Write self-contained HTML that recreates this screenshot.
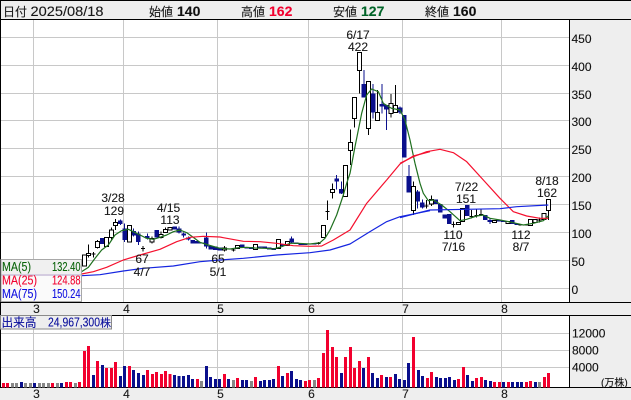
<!DOCTYPE html>
<html><head><meta charset="utf-8">
<style>
html,body{margin:0;padding:0;background:#fff;width:631px;height:400px;overflow:hidden}
svg{display:block}
text{font-family:"Liberation Sans","Noto Sans CJK JP",sans-serif;font-size:12px;fill:#181818;stroke:#181818;stroke-width:.12px}
.c{text-anchor:middle}
.r{text-anchor:end}
.a{fill:#111}
.b{font-weight:bold;font-size:14px}
</style></head><body>
<svg width="631" height="400" viewBox="0 0 631 400" xmlns="http://www.w3.org/2000/svg">
<rect width="631" height="400" fill="#fff"/>
<!-- strips -->
<rect x="0" y="0" width="631" height="20" fill="#eee"/>
<rect x="570" y="20" width="61" height="282" fill="#eee"/>
<rect x="570" y="315" width="61" height="73" fill="#eee"/>
<rect x="0" y="302" width="631" height="14" fill="#eee"/>
<rect x="0" y="388" width="631" height="12" fill="#eee"/>
<!-- grid -->
<g shape-rendering="crispEdges" fill="#c8c8c8">
<rect x="1" y="37" width="568" height="1"/><rect x="1" y="65" width="568" height="1"/><rect x="1" y="93" width="568" height="1"/><rect x="1" y="120" width="568" height="1"/><rect x="1" y="148" width="568" height="1"/><rect x="1" y="176" width="568" height="1"/><rect x="1" y="204" width="568" height="1"/><rect x="1" y="232" width="568" height="1"/><rect x="1" y="260" width="568" height="1"/><rect x="1" y="288" width="568" height="1"/>
<rect x="1" y="333" width="568" height="1"/><rect x="1" y="350" width="568" height="1"/><rect x="1" y="367" width="568" height="1"/>
<rect x="33" y="20" width="1" height="282"/><rect x="123" y="20" width="1" height="282"/><rect x="217" y="20" width="1" height="282"/><rect x="308" y="20" width="1" height="282"/><rect x="402" y="20" width="1" height="282"/><rect x="501" y="20" width="1" height="282"/>
<rect x="33" y="316" width="1" height="71"/><rect x="123" y="316" width="1" height="71"/><rect x="217" y="316" width="1" height="71"/><rect x="308" y="316" width="1" height="71"/><rect x="402" y="316" width="1" height="71"/><rect x="501" y="316" width="1" height="71"/>
</g>
<!-- frame lines -->
<g shape-rendering="crispEdges" fill="#000">
<rect x="0" y="0" width="631" height="1"/>
<rect x="0" y="19" width="631" height="1"/>
<rect x="0" y="302" width="631" height="1"/>
<rect x="0" y="315" width="631" height="1"/>
<rect x="0" y="387" width="631" height="1"/>
<rect x="0" y="0" width="1" height="388"/>
<rect x="569" y="20" width="1" height="282"/>
<rect x="569" y="316" width="1" height="71"/>
</g>
<!-- volume bars -->
<g fill="none" stroke-width="9" shape-rendering="crispEdges">
<g transform="translate(0 300) scale(.33333)">
<path stroke="#f2002e" d="M10 262V249M23 262V249M158 262V249M199 262V246M212 262V246M239 262V246M253 262V153M266 262V138M293 262V183M320 262V204M334 262V204M347 262V186M388 262V198M442 262V210M457 262V222M470 262V216M484 262V222M496 262V213M510 262V222M592 262V237"/>
<path stroke="#0a0f8c" d="M64 262V246M104 262V249M185 262V249M280 262V225M307 262V195M361 262V228M374 262V198M401 262V210M415 262V219M430 262V225M523 262V225M537 262V228M551 262V228M565 262V225M578 262V237M619 262V198"/>
<path stroke="#888" d="M37 262V249M50 262V249M77 262V249M91 262V249M118 262V249M131 262V249M145 262V249M172 262V249M226 262V249M605 262V243"/>
</g>
<g transform="translate(210 300) scale(.33333)">
<path stroke="#f2002e" d="M43 262V222M83 262V234M137 262V231M205 262V198M232 262V219M286 262V243M299 262V240M326 262V234M340 262V159M353 262V90M367 262V141M380 262V171M407 262V171M421 262V141M434 262V204M448 262V183M475 262V171M515 262V225M542 262V231"/>
<path stroke="#0a0f8c" d="M2 262V231M16 262V237M28 262V237M56 262V237M97 262V240M110 262V240M151 262V243M164 262V240M178 262V240M191 262V237M218 262V228M245 262V213M259 262V237M272 262V240M394 262V219M461 262V204M488 262V219M502 262V234M529 262V231M556 262V222M569 262V237M583 262V240M596 262V189"/>
<path stroke="#888" d="M70 262V240M124 262V243M313 262V240"/>
</g>
<g transform="translate(411 300) scale(.33333)">
<path stroke="#f2002e" d="M7 262V111M49 262V234M61 262V216M142 262V237M157 262V201M196 262V234M211 262V231M250 262V246M265 262V246M292 262V246M346 262V246M358 262V243M400 262V231M412 262V219"/>
<path stroke="#0a0f8c" d="M22 262V210M34 262V228M76 262V231M88 262V234M103 262V234M115 262V231M130 262V240M169 262V225M184 262V243M223 262V240M238 262V243M277 262V246M304 262V246M319 262V246M331 262V246M373 262V246"/>
<path stroke="#888" d="M385 262V246"/>
</g>
</g>
<!-- candles -->
<g shape-rendering="crispEdges" fill="none">
<g transform="translate(0 180) scale(.33333)">
<path stroke="#0a0f8c" stroke-width="3" d="M361 118V135M374 130V186M401 145V170M415 155V195M442 160V178M537 140V160M551 157V172M565 170V182M619 158V205"/>
<path stroke="#0a0f8c" stroke-width="14" d="M361 122V132M374 145V180M401 153V166M415 160V186M442 168V176M470 150V172M524 140V148M537 145V158M551 160V167M565 173V179M578 180V190M592 183V190M605 187V191M619 172V200M307 174V192"/>
<path stroke="#000" stroke-width="3" d="M266 193V232M280 216V232M293 180V206M334 142V178M347 117V150M429 198V214M456 170V190M483 155V175M497 143V158M274 222h12M423 206h12"/>
<path stroke="#000" stroke-width="3" fill="#fff" d="M247 225h12V258h-12zM260 220h12V226h-12zM287 184h12V202h-12zM314 172h12V200h-12zM328 150h12V172h-12zM341 127h12V137h-12zM382 136h12V186h-12zM450 176h12V186h-12zM477 163h12V173h-12zM491 148h12V158h-12zM504 142h12V150h-12z"/>
</g>
<g transform="translate(210 180) scale(.33333)">
<path stroke="#0a0f8c" stroke-width="14" d="M2 198V208M16 200V210M29 203V212M56 205V209M97 193V203M110 201V205M124 201V207M151 199V203M164 200V205M178 203V208M191 204V210M218 193V198M245 176V188M259 187V192M272 190V195M286 191V195M299 190V194M313 190V193"/>
<path stroke="#0a0f8c" stroke-width="3" d="M245 170V190"/>
<path stroke="#000" stroke-width="3" d="M43 198V214M70 205V214M64 210h12M320 190h12M326 186V194"/>
<path stroke="#000" stroke-width="3" fill="#fff" d="M37 204h12V210h-12zM77 197h12V205h-12zM131 194h12V208h-12zM199 178h12V206h-12zM226 184h12V196h-12zM334 136h12V172h-12z"/>
</g>
<g transform="translate(320 40) scale(.33333)">
<path stroke="#0a0f8c" stroke-width="3" d="M50 405V448M64 425V462M132 90V173M159 132V235M186 132V220M199 200V270M240 200V222"/>
<path stroke="#0a0f8c" stroke-width="14" d="M50 415V425M64 447V461M132 132V173M159 160V218M186 192V200M199 195V208M240 202V218M253 225V352"/>
<path stroke="#000" stroke-width="3" d="M23 482V540M17 515h12M37 430V475M91 268V375M104 235V262M118 92V160M145 265V285M172 150V218M213 162V232M226 135V218"/>
<path stroke="#000" stroke-width="3" fill="#fff" d="M31 448h12V458h-12zM71 376h12V470h-12zM85 308h12V332h-12zM98 172h12V235h-12zM112 38h12V92h-12zM139 125h12V265h-12zM166 218h12V241h-12zM207 190h12V220h-12zM220 197h12V218h-12z"/>
</g>
<g transform="translate(400 130) scale(.33333)">
<path stroke="#0a0f8c" stroke-width="3" d="M27 105V187M53 180V235M67 208V235M270 265V282"/>
<path stroke="#0a0f8c" stroke-width="14" d="M27 138V187M53 185V215M67 218V232M107 208V222M121 222V248M134 253V266M148 252V282M202 225V258M256 255V270M270 270V276M297 270V275M310 272V276M337 270V282M351 280V285"/>
<path stroke="#000" stroke-width="3" d="M40 155V255M80 210V235M74 228h12M94 197V228M161 275V292M155 284h12M215 240V265M209 260h12M229 238V262M223 256h12M243 237V258M237 253h12M364 285h-8M372 285h12M418 262V278M412 270h12M445 241V270"/>
<path stroke="#000" stroke-width="3" fill="#fff" d="M34 170h12V242h-12zM88 208h12V222h-12zM169 277h12V284h-12zM182 235h12V275h-12zM277 271h12V277h-12zM318 274h12V280h-12zM385 268h12V287h-12zM399 268h12V278h-12zM426 250h12V268h-12zM439 208h12V241h-12z"/>
</g>
</g>
<!-- moving averages -->
<g fill="none" stroke-width="3.600" stroke-linejoin="round">
<g transform="translate(0 180) scale(.33333)">
<polyline stroke="#1f701f" points="245,275 265,262 285,235 305,210 325,195 345,165 365,152 385,148 400,155 420,165 440,175 460,178 480,172 500,165 520,155 540,150 560,158 580,172 600,187 625,195 660,205"/>
<polyline stroke="#f5102e" points="245,282 280,275 320,262 370,240 420,225 480,208 530,185 570,172 610,169 660,171"/>
<polyline stroke="#1525e0" points="245,287 300,284 370,273 430,265 520,258 600,245 660,240"/>
</g>
<g transform="translate(210 180) scale(.33333)">
<polyline stroke="#1f701f" points="30,205 60,207 85,203 110,202 135,204 165,205 190,207 215,200 240,190 265,190 300,192 330,188 345,175 360,150 380,105 400,45 410,10 415,-5"/>
<polyline stroke="#f5102e" points="30,171 40,173 100,184 150,185 200,190 250,197 300,199 335,198 370,180 420,150 470,70 530,0"/>
<polyline stroke="#1525e0" points="30,240 100,235 200,225 300,218 360,210 420,192 480,155 530,125 570,110 620,100 660,92"/>
</g>
<g transform="translate(320 40) scale(.33333)">
<polyline stroke="#1f701f" points="85,415 90,400 105,320 125,220 140,165 155,147 175,155 190,190 215,205 240,210 255,240 270,300 285,370"/>
<polyline stroke="#f5102e" points="200,420 240,372 280,348 330,335"/>
</g>
<g transform="translate(400 130) scale(.33333)">
<polyline stroke="#1f701f" points="45,100 60,160 70,190 85,212 100,210 125,225 150,245 180,272 200,268 230,258 250,255 270,265 300,270 340,278 370,285 400,280 430,272 445,258"/>
<polyline stroke="#f5102e" points="0,100 40,80 80,65 120,58 160,68 200,95 250,150 300,205 340,245 380,258 420,265 445,265"/>
<polyline stroke="#1525e0" points="0,263 30,255 90,240 200,238 300,236 350,230 445,225"/>
</g>
</g>
<!-- header -->
<text x="3" y="16">日付</text><text x="30.5" y="16" style="font-size:14px" textLength="73" lengthAdjust="spacingAndGlyphs">2025/08/18</text>
<text x="149" y="16">始値</text><text x="177" y="16" class="b" style="fill:#111">140</text>
<text x="241" y="16">高値</text><text x="269" y="16" class="b" style="fill:#f2002e;stroke:#f2002e">162</text>
<text x="333" y="16">安値</text><text x="361" y="16" class="b" style="fill:#006428;stroke:#006428">127</text>
<text x="425" y="16">終値</text><text x="453" y="16" class="b" style="fill:#111">160</text>
<!-- price axis -->
<text x="571.5" y="43" class="a">450</text><text x="571.5" y="71" class="a">400</text><text x="571.5" y="99" class="a">350</text><text x="571.5" y="126" class="a">300</text><text x="571.5" y="154" class="a">250</text><text x="571.5" y="182" class="a">200</text><text x="571.5" y="210" class="a">150</text><text x="571.5" y="238" class="a">100</text><text x="571.5" y="266" class="a">50</text><text x="571.5" y="294" class="a">0</text>
<!-- chart labels -->
<text x="358" y="39" class="c">6/17</text><text x="358" y="51" class="c">422</text>
<text x="113" y="202" class="c">3/28</text><text x="114" y="215" class="c">129</text>
<text x="168.500" y="212" class="c">4/15</text><text x="170" y="224" class="c">113</text>
<text x="142" y="263" class="c">67</text><text x="142" y="276" class="c">4/7</text>
<text x="218" y="263" class="c">65</text><text x="218" y="276" class="c">5/1</text>
<text x="466.500" y="191" class="c">7/22</text><text x="466" y="203" class="c">151</text>
<text x="453" y="239" class="c">110</text><text x="453.500" y="251" class="c">7/16</text>
<text x="521" y="239" class="c">112</text><text x="521" y="251" class="c">8/7</text>
<text x="547" y="185" class="c">8/18</text><text x="547" y="197" class="c">162</text>
<!-- MA box -->
<rect x="1" y="259.500" width="80.500" height="42" fill="#fafafa" stroke="#a8a8a8"/>
<rect x="1.500" y="260" width="79.500" height="14" fill="#f0f0f0"/>
<rect x="1.500" y="274" width="79.500" height="2" fill="#d4cce0"/>
<text x="2" y="271" style="font-size:13px;fill:#0a640a;stroke:#0a640a" textLength="29" lengthAdjust="spacingAndGlyphs">MA(5)</text><text x="52" y="271" style="font-size:13px;fill:#0a640a;stroke:#0a640a" textLength="28.500" lengthAdjust="spacingAndGlyphs">132.40</text>
<text x="2" y="284.500" style="font-size:13px;fill:#f2002e;stroke:#f2002e" textLength="35" lengthAdjust="spacingAndGlyphs">MA(25)</text><text x="52" y="284.500" style="font-size:13px;fill:#f2002e;stroke:#f2002e" textLength="28.500" lengthAdjust="spacingAndGlyphs">124.88</text>
<text x="2" y="298" style="font-size:13px;fill:#1010e0;stroke:#1010e0" textLength="35" lengthAdjust="spacingAndGlyphs">MA(75)</text><text x="52" y="298" style="font-size:13px;fill:#1010e0;stroke:#1010e0" textLength="28.500" lengthAdjust="spacingAndGlyphs">150.24</text>
<!-- month labels -->
<g class="a">
<text x="36.500" y="313" class="c">3</text><text x="126.500" y="313" class="c">4</text><text x="220.500" y="313" class="c">5</text><text x="311.500" y="313" class="c">6</text><text x="405.500" y="313" class="c">7</text><text x="504.500" y="313" class="c">8</text>
<text x="36.500" y="398" class="c">3</text><text x="126.500" y="398" class="c">4</text><text x="220.500" y="398" class="c">5</text><text x="311.500" y="398" class="c">6</text><text x="405.500" y="398" class="c">7</text><text x="504.500" y="398" class="c">8</text>
</g>
<!-- volume label -->
<rect x="0.500" y="315.500" width="111" height="13.500" fill="#eee" stroke="#8a8a8a"/>
<text x="1.500" y="326.500" style="fill:#0a0f9c;stroke:#0a0f9c" textLength="35" lengthAdjust="spacingAndGlyphs">出来高</text>
<text x="48" y="326.500" style="fill:#0a0f9c;stroke:#0a0f9c;font-size:13px" textLength="52" lengthAdjust="spacingAndGlyphs">24,967,300</text>
<text x="100" y="326.500" style="fill:#0a0f9c;stroke:#0a0f9c;font-size:11px">株</text>
<!-- volume axis -->
<text x="572" y="337.500" class="a">12000</text><text x="572" y="354.500" class="a">8000</text><text x="572" y="371.500" class="a">4000</text>
<text x="601" y="386" class="a" style="font-size:10px">(万株)</text>
</svg>
</body></html>
